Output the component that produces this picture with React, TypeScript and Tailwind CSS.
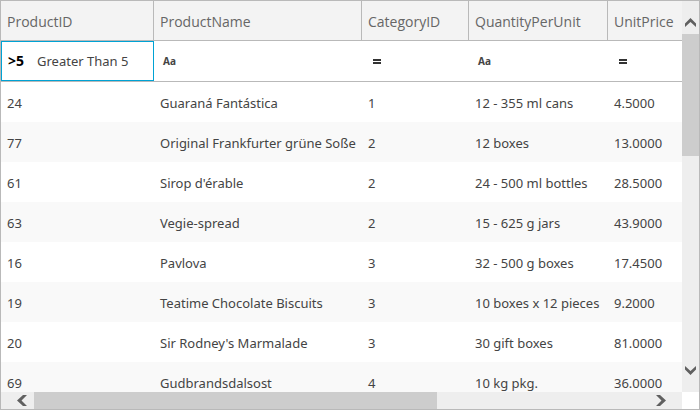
type Product = {
  id: number;
  name: string;
  category: number;
  quantity: string;
  price: string;
};

const products: Product[] = [
  { id: 24, name: "Guaraná Fantástica", category: 1, quantity: "12 - 355 ml cans", price: "4.5000" },
  { id: 77, name: "Original Frankfurter grüne Soße", category: 2, quantity: "12 boxes", price: "13.0000" },
  { id: 61, name: "Sirop d'érable", category: 2, quantity: "24 - 500 ml bottles", price: "28.5000" },
  { id: 63, name: "Vegie-spread", category: 2, quantity: "15 - 625 g jars", price: "43.9000" },
  { id: 16, name: "Pavlova", category: 3, quantity: "32 - 500 g boxes", price: "17.4500" },
  { id: 19, name: "Teatime Chocolate Biscuits", category: 3, quantity: "10 boxes x 12 pieces", price: "9.2000" },
  { id: 20, name: "Sir Rodney's Marmalade", category: 3, quantity: "30 gift boxes", price: "81.0000" },
  { id: 69, name: "Gudbrandsdalsost", category: 4, quantity: "10 kg pkg.", price: "36.0000" },
];

const headers = ["ProductID", "ProductName", "CategoryID", "QuantityPerUnit", "UnitPrice"];

function EqualsIcon() {
  return (
    <svg width="8" height="5" viewBox="0 0 8 5" fill="#333" shapeRendering="crispEdges" aria-hidden="true">
      <path d="M0 0h8v2H0zM0 3h8v2H0z" />
    </svg>
  );
}

function FilterCell({ column, kind }: { column: string; kind: "text" | "number" }) {
  return (
    <td className="border-b border-[#b9b9b9] p-0">
      <div className="flex h-10 items-center pl-2">
        <button type="button" aria-label={`${column} filter operator`} className="flex w-5 shrink-0 justify-start pl-px text-[10px] font-bold text-[#444]">
          {kind === "text" ? "Aa" : <span className="pl-0.5"><EqualsIcon /></span>}
        </button>
        <input aria-label={`${column} filter value`} className="w-full min-w-0 bg-transparent outline-none" />
      </div>
    </td>
  );
}

function Chevron({ d, vertical }: { d: string; vertical?: boolean }) {
  return (
    <svg
      width={vertical ? 13 : 10}
      height={vertical ? 10 : 13}
      viewBox={vertical ? "0 0 13 10" : "0 0 10 13"}
      fill="#606060"
      aria-hidden="true"
    >
      <path d={d} />
    </svg>
  );
}

export default function App() {
  return (
    <div className="grid h-screen w-full grid-cols-[minmax(0,1fr)_17px] grid-rows-[minmax(0,1fr)_17px] border border-[#b9b9b9] bg-white font-['Noto_Sans','Open_Sans',sans-serif] text-[13px] text-[#444]">
      <div className="overflow-hidden">
        <table className="w-full table-fixed border-separate border-spacing-0 whitespace-nowrap text-left">
          <colgroup>
            <col className="w-[153px]" />
            <col className="w-[208px]" />
            <col className="w-[107px]" />
            <col className="w-[139px]" />
            <col />
          </colgroup>
          <thead>
            <tr className="bg-[#f3f3f3] font-['Open_Sans','Noto_Sans',sans-serif] text-sm text-[#666]">
              {headers.map((header) => (
                <th key={header} scope="col" className="h-10 border-r border-b border-[#b9b9b9] px-1.5 py-0 pt-0.5 font-normal last:border-r-0">
                  {header}
                </th>
              ))}
            </tr>
            <tr className="h-[41px]">
              <td className="border-b border-[#b9b9b9] p-0">
                <div className="flex h-10 items-center border border-[#00a2d4] pl-1.5">
                  <button type="button" aria-label="ProductID filter operator" className="w-[29px] shrink-0 text-left text-sm font-bold text-black">
                    &gt;5
                  </button>
                  <input aria-label="ProductID filter value" defaultValue="Greater Than 5" className="w-full min-w-0 bg-transparent pt-0.5 outline-none" />
                </div>
              </td>
              <FilterCell column="ProductName" kind="text" />
              <FilterCell column="CategoryID" kind="number" />
              <FilterCell column="QuantityPerUnit" kind="text" />
              <FilterCell column="UnitPrice" kind="number" />
            </tr>
          </thead>
          <tbody>
            {products.map((product) => (
              <tr key={product.id} className="h-10 even:bg-[#f9f9f9]">
                <td className="px-1.5 pt-1 pb-0">{product.id}</td>
                <td className="px-1.5 pt-1 pb-0">{product.name}</td>
                <td className="px-1.5 pt-1 pb-0">{product.category}</td>
                <td className="px-1.5 pt-1 pb-0">{product.quantity}</td>
                <td className="px-1.5 pt-1 pb-0">{product.price}</td>
              </tr>
            ))}
          </tbody>
        </table>
      </div>

      <div className="flex flex-col bg-[#eee]">
        <button type="button" aria-label="Scroll up" className="flex h-[33px] shrink-0 items-end justify-center pb-[7px]">
          <Chevron vertical d="M6.5 1 12 6.500v3.500L6.5 5 1 10V6.500z" />
        </button>
        <div className="min-h-0 grow">
          <div className="h-[37.5%] bg-[#cdcdcd]" />
        </div>
        <button type="button" aria-label="Scroll down" className="flex h-[33px] shrink-0 items-start justify-center pt-[7px]">
          <Chevron vertical d="M6.5 9 12 3.500V0L6.5 5 1 0v3.500z" />
        </button>
      </div>

      <div className="flex bg-[#eee]">
        <button type="button" aria-label="Scroll left" className="flex w-[33px] shrink-0 items-center justify-end pr-[7px]">
          <Chevron d="M0 6.500 6 1h4L4.500 6.500 10 12H6z" />
        </button>
        <div className="min-w-0 grow">
          <div className="h-full w-[65.5%] bg-[#cdcdcd]" />
        </div>
        <button type="button" aria-label="Scroll right" className="flex w-[33px] shrink-0 items-center justify-start pl-[7px]">
          <Chevron d="M10 6.500 4 1H0l5.500 5.500L0 12h4z" />
        </button>
      </div>
      <div className="bg-white" />
    </div>
  );
}
